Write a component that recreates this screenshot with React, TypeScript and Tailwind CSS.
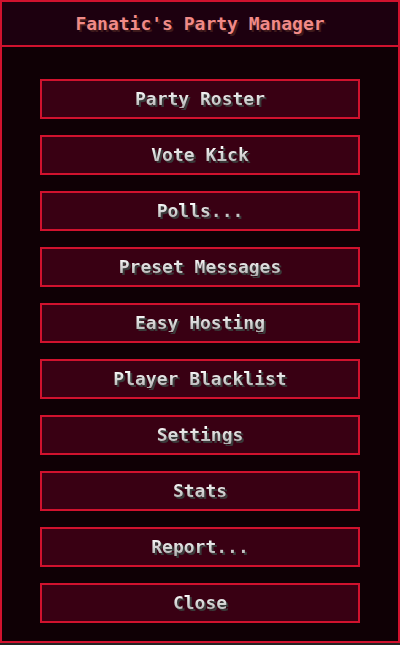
import React from 'react'

const items = [
  'Party Roster',
  'Vote Kick',
  'Polls...',
  'Preset Messages',
  'Easy Hosting',
  'Player Blacklist',
  'Settings',
  'Stats',
  'Report...',
  'Close',
]

function MenuButton({ label }: { label: string }) {
  return (
    <button className="flex h-10 w-80 items-center justify-center border-2 border-[#d0122e] bg-[#390013]">
      <span className="bg-gradient-to-b from-[#ffffff] to-[#b0b0b0] bg-clip-text text-[18px] font-bold leading-none text-transparent [filter:drop-shadow(2px_2px_0_#3a3a3a)]">
        {label}
      </span>
    </button>
  )
}

export default function App() {
  return (
    <div className="flex h-[645px] w-[400px] flex-col bg-[#242424] font-['DejaVu_Sans_Mono',monospace]">
      <div className="flex h-[643px] flex-col border-2 border-[#d0122e] bg-[#0f0005]">
        <div className="flex h-[45px] items-center justify-center border-b-2 border-[#d0122e] bg-[#1d000f]">
          <span className="text-[18px] font-bold leading-none text-[#f08a88] [text-shadow:2px_2px_0_#3e1a1c]">
            Fanatic's Party Manager
          </span>
        </div>
        <div className="flex flex-col items-center gap-4 pt-8">
          {items.map((label) => (
            <MenuButton key={label} label={label} />
          ))}
        </div>
      </div>
    </div>
  )
}
